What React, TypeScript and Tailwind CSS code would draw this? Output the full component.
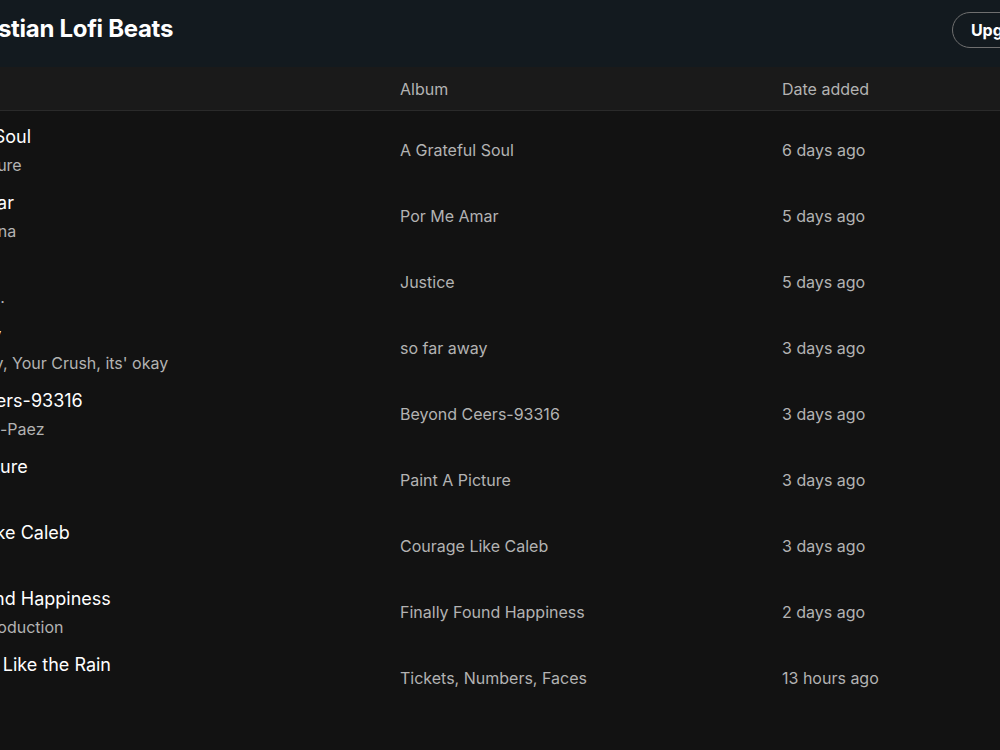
import React from "react";

type Track = {
  title: string;
  artist: string;
  album: string;
  added: string;
};

const tracks: Track[] = [
  { title: "A Grateful Soul", artist: "Living Scripture", album: "A Grateful Soul", added: "6 days ago" },
  { title: "Por Me Amar", artist: "Selah Hosanna", album: "Por Me Amar", added: "5 days ago" },
  { title: "Justice", artist: "Sundays, Inc.", album: "Justice", added: "5 days ago" },
  { title: "so far away", artist: "Holy Lofi Boy, Your Crush, its' okay", album: "so far away", added: "3 days ago" },
  { title: "Beyond Ceers-93316", artist: "Daniela Ortiz-Paez", album: "Beyond Ceers-93316", added: "3 days ago" },
  { title: "Paint A Picture", artist: "Gracie", album: "Paint A Picture", added: "3 days ago" },
  { title: "Courage Like Caleb", artist: "Selah", album: "Courage Like Caleb", added: "3 days ago" },
  { title: "Finally Found Happiness", artist: "Good Lofi Production", album: "Finally Found Happiness", added: "2 days ago" },
  { title: "Grace Falls Like the Rain", artist: "Nomad", album: "Tickets, Numbers, Faces", added: "13 hours ago" },
];

export default function App() {
  return (
    <div
      className="h-[750px] w-[1000px] overflow-hidden bg-[#121212] text-white"
      style={{ fontFamily: "Inter, 'Liberation Sans', sans-serif" }}
    >
      <header className="flex h-[67px] items-start justify-between bg-[#131a1f]">
        <h1 className="-ml-[50px] mt-[15px] whitespace-nowrap text-[24px] font-bold leading-[28px] tracking-[-0.3px]">
          Christian Lofi Beats
        </h1>
        <button
          type="button"
          className="-mr-[59px] mt-[12px] h-[36px] rounded-full border border-[#6f6f6f] pl-[18px] pr-[20px] text-[16px] font-bold text-white"
        >
          Upgrade
        </button>
      </header>

      <div className="flex h-[44px] items-center border-b border-[#2a2a2a] bg-[#1a1a1a] text-[16px] text-[#b3b3b3]">
        <div className="-ml-[97px] w-[497px] shrink-0">Title</div>
        <div className="w-[382px] shrink-0">Album</div>
        <div className="flex-1">Date added</div>
      </div>

      <div className="pt-[6px]">
        {tracks.map((track) => (
          <div key={track.title} className="flex h-[66px] items-center">
            <div className="-ml-[97px] flex w-[497px] shrink-0 flex-col whitespace-nowrap">
              <span className="pt-[2px] text-[18px] leading-[28px] text-white">{track.title}</span>
              <span className="text-[16px] leading-[28px] text-[#b3b3b3]">{track.artist}</span>
            </div>
            <div className="w-[382px] shrink-0 whitespace-nowrap text-[16px] text-[#b3b3b3]">{track.album}</div>
            <div className="flex-1 whitespace-nowrap text-[16px] text-[#b3b3b3]">{track.added}</div>
          </div>
        ))}
      </div>
    </div>
  );
}
